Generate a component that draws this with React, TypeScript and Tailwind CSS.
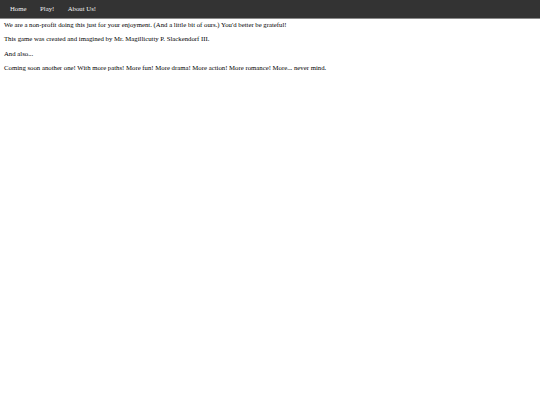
export default function App() {
  return (
    <div className="min-h-[405px] bg-white font-['Liberation_Serif',serif] text-black">
      <nav className="flex h-[19px] items-center bg-[#333333] border-b border-[#8a8a8a] px-[3px] pt-[1px]">
        <a className="px-[7px] text-[6.75px] text-[#f2f2f2]">Home</a>
        <a className="px-[6.5px] text-[6.75px] text-[#f2f2f2]">Play!</a>
        <a className="px-[7px] text-[6.75px] text-[#f2f2f2]">About Us!</a>
      </nav>
      <div className="px-[4px] pt-[2px] text-[6.75px] leading-[7.5px]">
        <p className="mb-[6.8px]">We are a non-profit doing this just for your enjoyment. (And a little bit of ours.) You'd better be grateful!</p>
        <p className="mb-[6.8px]">This game was created and imagined by Mr. Magillicutty P. Slackendorf III.</p>
        <p className="mb-[6.8px]">And also...</p>
        <p className="mb-[6.8px]">Coming soon another one! With more paths! More fun! More drama! More action! More romance! More... never mind.</p>
      </div>
    </div>
  );
}
